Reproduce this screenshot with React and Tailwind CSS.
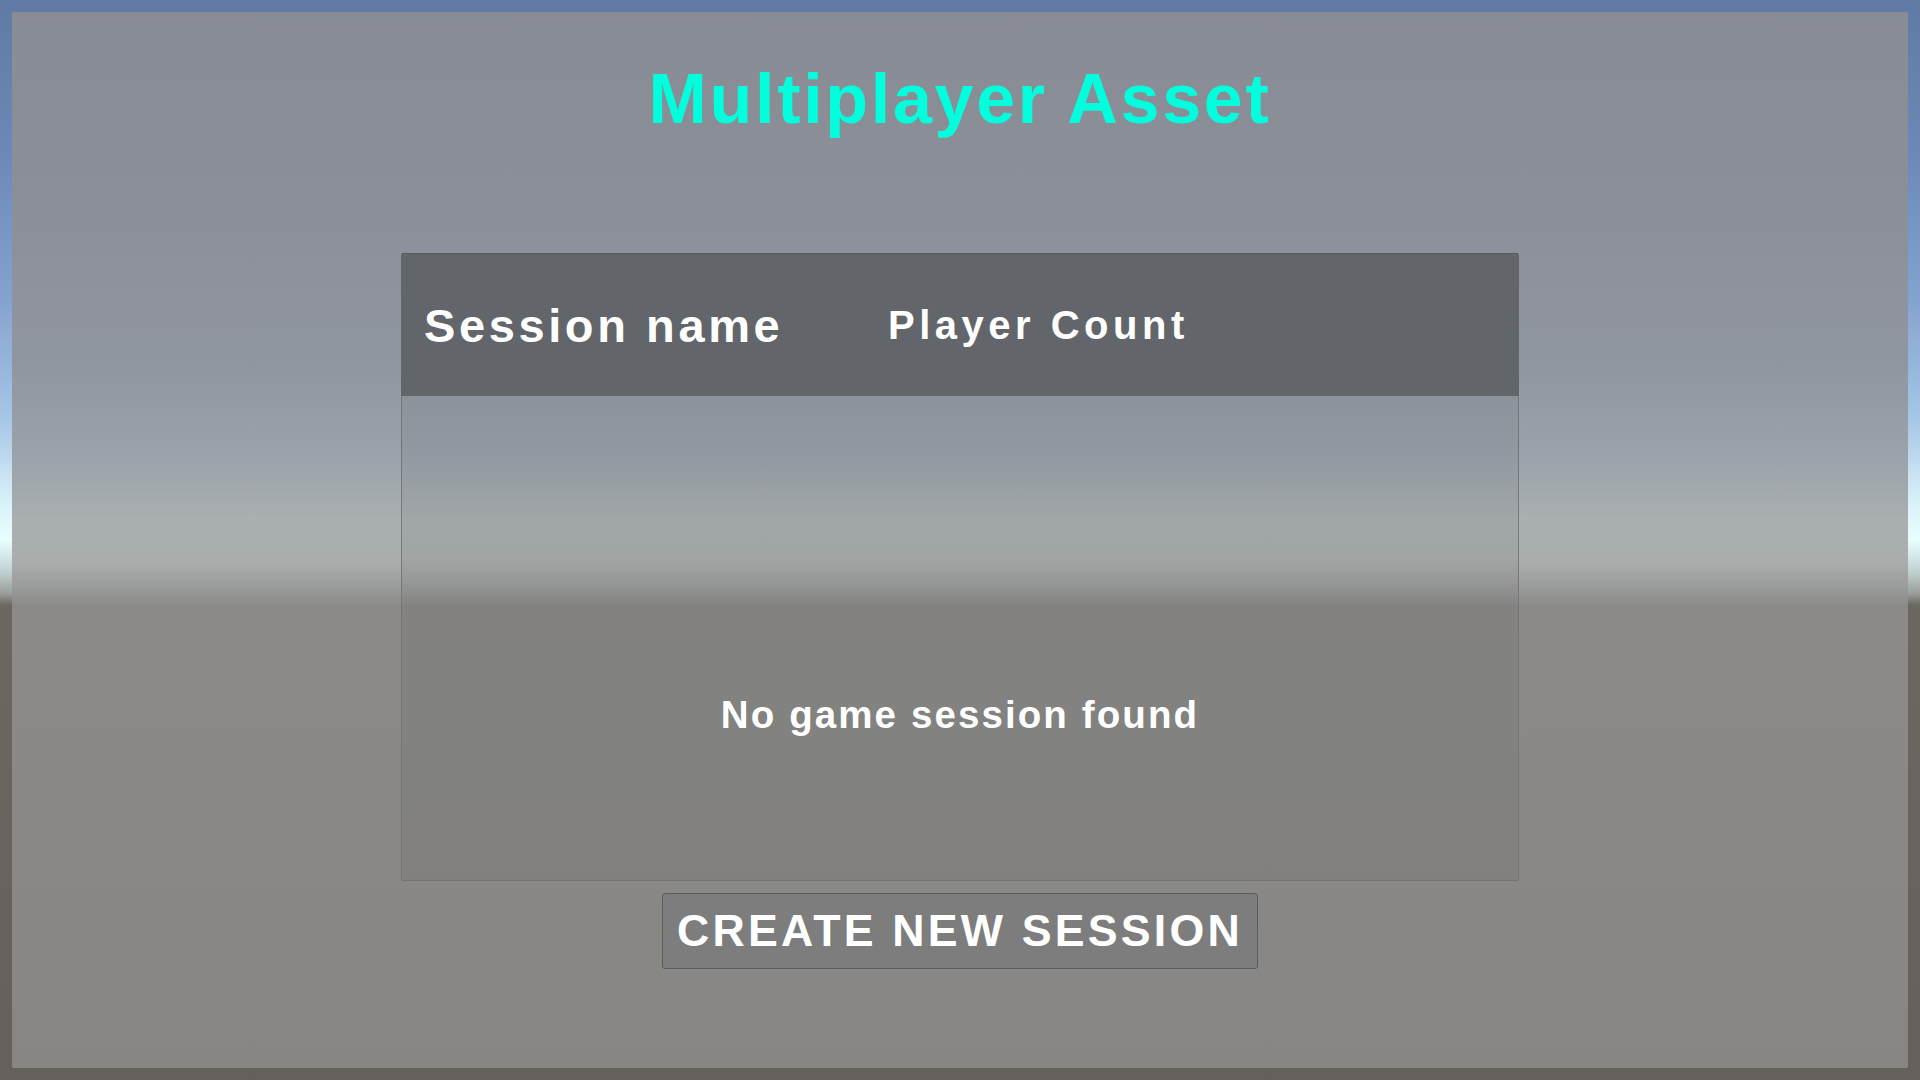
import React from 'react';

const font = { fontFamily: '"Liberation Sans", Arial, sans-serif' };

const App = () => {
    return (
        <div
            className="w-full h-screen p-[12px] bg-[linear-gradient(to_bottom,#5f7aa5_0%,#6c89b5_14%,#85a3cf_28%,#a8c6e6_39%,#d6eef8_46%,#e8ffff_50%,#c0d0d0_53%,#9a9c9a_55%,#6d6762_56%,#65605b_100%)]"
            style={font}
        >
            <div className="h-full flex flex-col rounded-[2px] bg-[linear-gradient(to_bottom,#898c95_0px,#8b8f98_200px,#9096a0_350px,#9ca3aa_450px,#aab0b1_510px,#a9adac_550px,#9a9c9b_575px,#8b8a88_595px,#878683_1056px)]">
                {/* Title */}
                <h1 className="pt-[52px] text-center text-[70px] leading-none font-bold tracking-[2.7px] text-[#00ffdc]">
                    Multiplayer Asset
                </h1>

                {/* Session list header */}
                <div className="mt-[119px] mx-auto w-[1118px] h-[143px] flex items-center bg-[#626569] border-t border-[#55585c] rounded-t-[3px] text-white font-bold leading-none">
                    <div className="w-[487px] pl-[23px] text-[47px] tracking-[3.6px]">Session name</div>
                    <div className="text-[40px] tracking-[4.5px]">Player Count</div>
                </div>

                {/* Session list body */}
                <div className="mx-auto w-[1118px] h-[485px] bg-black/[0.05] border-x border-b border-[#6f6f6f]/80 rounded-b-[2px]">
                    <p className="pt-[300px] text-center text-[38.5px] leading-none font-bold tracking-[2.1px] text-white">
                        No game session found
                    </p>
                </div>

                {/* Create button */}
                <button className="mt-[12px] mx-auto w-[596px] h-[76px] flex items-center justify-center bg-[#7d7d7d] border border-[#5c5c5c] rounded-[3px] text-white text-[44.7px] leading-none font-bold tracking-[3.2px]">
                    CREATE NEW SESSION
                </button>
            </div>
        </div>
    );
};

export default App;
